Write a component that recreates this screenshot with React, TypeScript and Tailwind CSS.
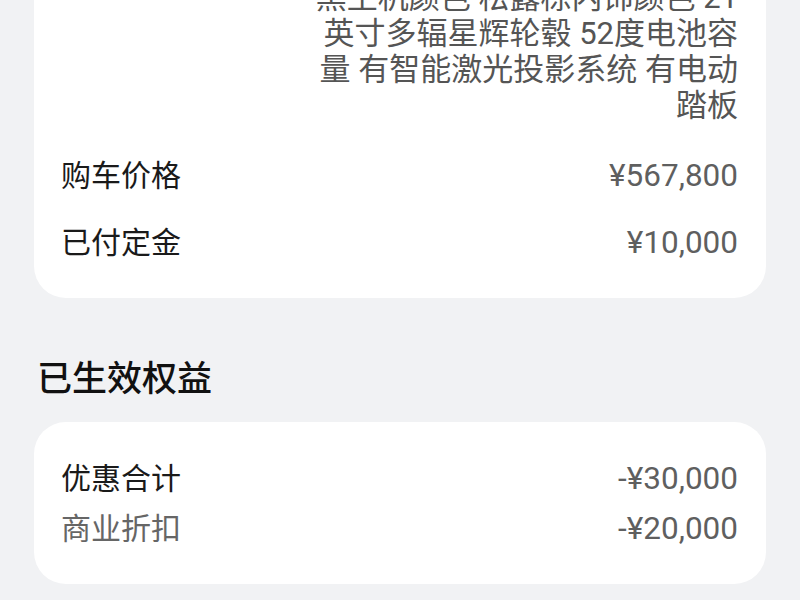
import React from "react";

const font = { fontFamily: 'Roboto, "Noto Sans CJK SC", sans-serif' };

export default function App() {
  return (
    <div
      className="w-[800px] h-[600px] overflow-hidden bg-[#f1f2f4] px-[34px]"
      style={font}
    >
      <div className="-mt-[40px] rounded-[32px] bg-white pt-[20px] pb-[22px] pl-[27px] pr-[28px]">
        <div className="flex justify-end mb-[18px]">
          <div className="text-right text-[31px] leading-[36px] text-[#555555]">
            <div>黑土机颜色 松露棕内饰颜色 21</div>
            <div>英寸多辐星辉轮毂 52度电池容</div>
            <div>量 有智能激光投影系统 有电动</div>
            <div>踏板</div>
          </div>
        </div>
        <div className="flex h-[67px] items-center justify-between text-[30px] leading-[36px]">
          <span className="text-[#1a1a1a]">购车价格</span>
          <span className="text-[31.5px] text-[#5f5f5f]">¥567,800</span>
        </div>
        <div className="flex h-[67px] items-center justify-between text-[30px] leading-[36px]">
          <span className="text-[#1a1a1a]">已付定金</span>
          <span className="text-[31.5px] text-[#5f5f5f]">¥10,000</span>
        </div>
      </div>

      <div className="mt-[60px] mb-[20px] pl-[3px] text-[35px] leading-[44px] font-medium text-[#111111]">
        已生效权益
      </div>

      <div className="rounded-[32px] bg-white pt-[32px] pb-[30px] pl-[27px] pr-[28px]">
        <div className="flex h-[50px] items-center justify-between text-[30px] leading-[36px]">
          <span className="text-[#1a1a1a]">优惠合计</span>
          <span className="text-[31.5px] text-[#5f5f5f]">-¥30,000</span>
        </div>
        <div className="flex h-[50px] items-center justify-between text-[30px] leading-[36px]">
          <span className="text-[#666666]">商业折扣</span>
          <span className="text-[31.5px] text-[#5f5f5f]">-¥20,000</span>
        </div>
      </div>
    </div>
  );
}
